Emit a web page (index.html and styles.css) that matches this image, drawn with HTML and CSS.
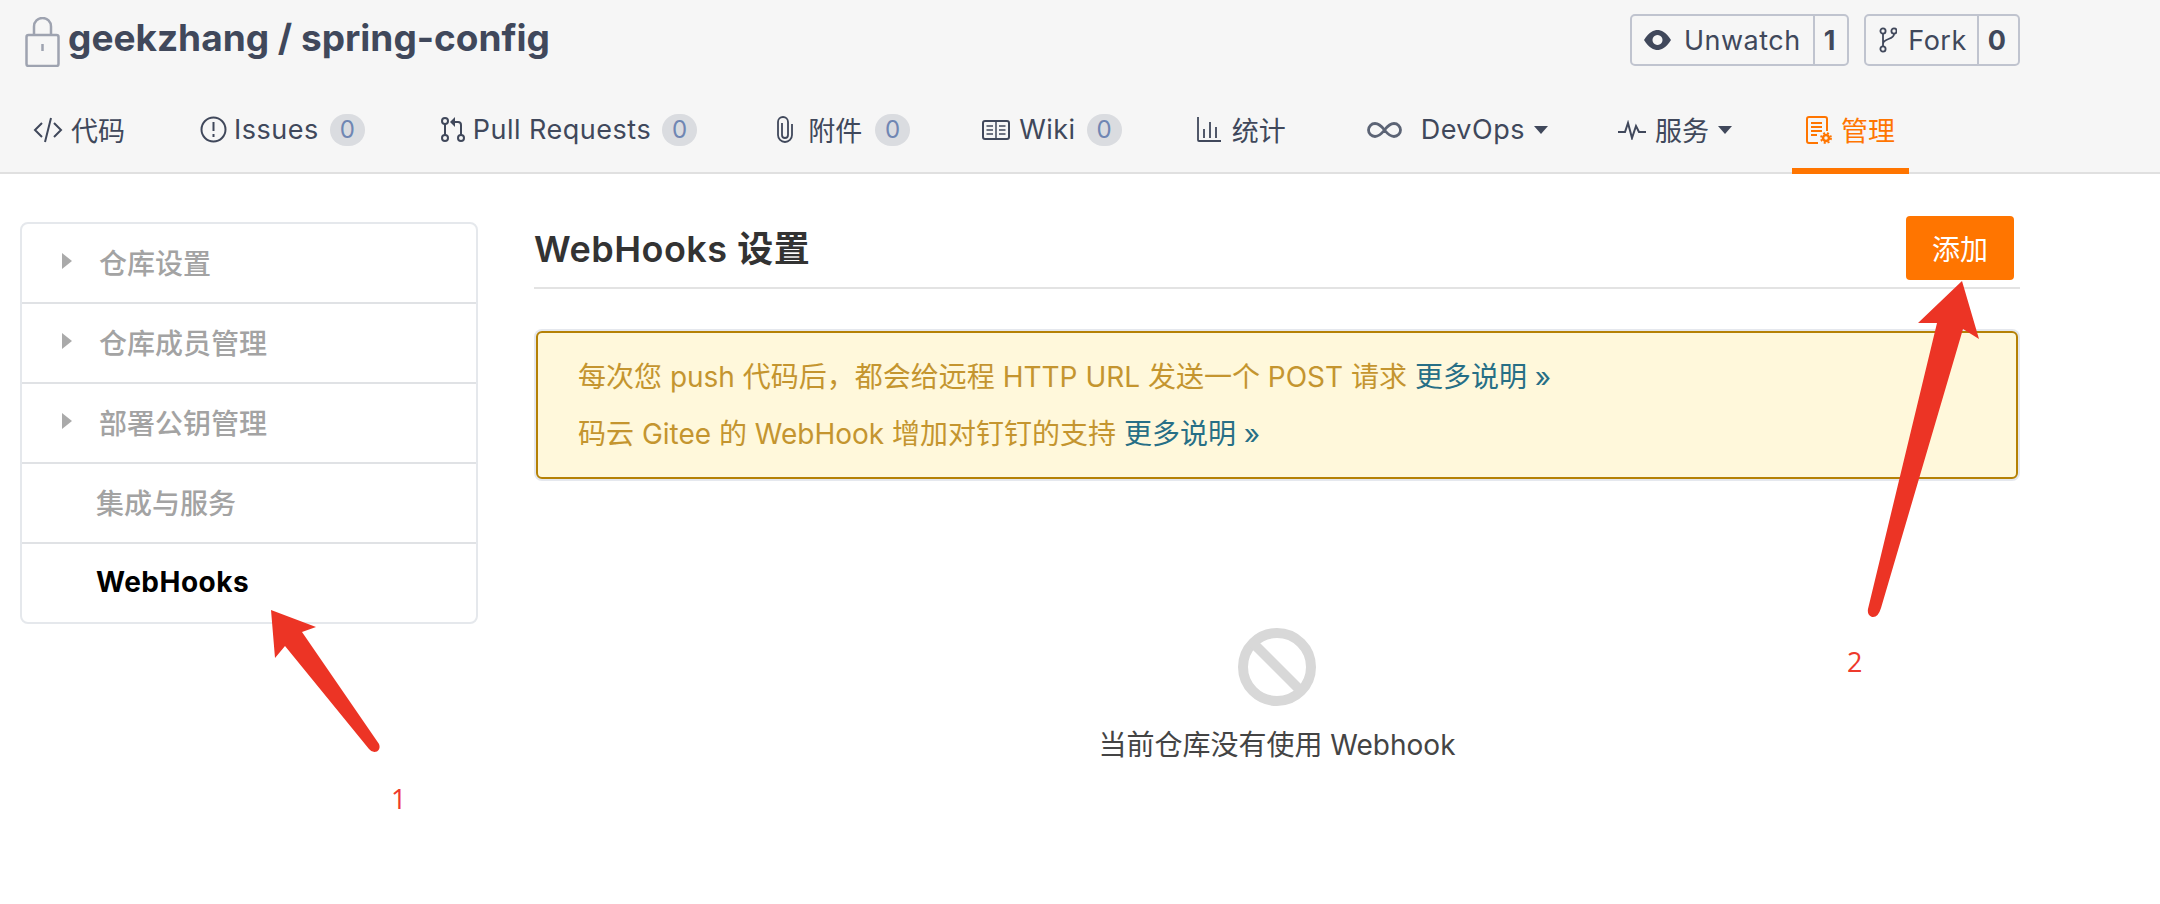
FILE: index.html
```html
<!DOCTYPE html>
<html lang="zh-CN">

<head>
    <meta charset="UTF-8">
    <meta name="viewport" content="width=device-width, initial-scale=1.0">
    <title>WebHooks 设置</title>
    <link rel="stylesheet" href="styles.css">
</head>

<body>
    <header class="repo-header">
        <div class="repo-top">
            <h1 class="repo-title">
                <svg class="lock" width="36" height="50" viewBox="0 0 36 50" fill="none" stroke="#9ea3b0" stroke-width="2.5">
                    <path d="M9 18V9.500a8.500 8.500 0 0 1 17 0V18" />
                    <rect x="1.500" y="18" width="32" height="31" rx="2" />
                    <path d="M17.500 27v7" />
                </svg>
                geekzhang / spring-config
            </h1>
            <div class="repo-actions">
                <div class="count-btn">
                    <span class="count-label">
                        <svg width="27" height="20" viewBox="0 0 27 20" fill="#40485b" fill-rule="evenodd">
                            <path d="M0 10C5 2 10 0 13.5 0S22 2 27 10C22 18 17 20 13.5 20S5 18 0 10zM13.5 5a5 5 0 1 0 .01 0z" />
                        </svg>
                        Unwatch
                    </span>
                    <span class="count-num">1</span>
                </div>
                <div class="count-btn">
                    <span class="count-label fork-label">
                        <svg width="18" height="26" viewBox="0 0 18 26" fill="none" stroke="#40485b" stroke-width="1.8">
                            <circle cx="4" cy="4" r="2.6" />
                            <circle cx="15" cy="4" r="2.6" />
                            <circle cx="4" cy="22" r="2.6" />
                            <path d="M4 7v12M15 7c0 6-11 4-11 10" />
                        </svg>
                        Fork
                    </span>
                    <span class="count-num">0</span>
                </div>
            </div>
        </div>

        <nav class="tabs">
            <a class="tab tab-code" href="#">
                <svg width="30" height="26" viewBox="0 0 30 26" fill="none" stroke="#40485b" stroke-width="2">
                    <path d="M9 6l-7 7 7 7M21 6l7 7-7 7M18 1l-6 24" />
                </svg>
                <span>代码</span>
            </a>
            <a class="tab tab-issues" href="#">
                <svg width="27" height="27" viewBox="0 0 27 27" fill="none" stroke="#40485b" stroke-width="2">
                    <circle cx="13.5" cy="13.5" r="12" />
                    <path d="M13.5 6v9M13.5 18v3" />
                </svg>
                <span class="tab-latin">Issues</span>
                <span class="badge">0</span>
            </a>
            <a class="tab tab-pulls" href="#">
                <svg width="24" height="25" viewBox="0 0 24 25" fill="none" stroke="#40485b" stroke-width="2">
                    <circle cx="4" cy="4" r="3" />
                    <circle cx="4" cy="21" r="3" />
                    <circle cx="20" cy="21" r="3" />
                    <path d="M4 7v11M20 18V8q0-3-3-3h-4" />
                    <path d="M14 0l-5 5 5 5z" fill="#40485b" stroke="none" />
                </svg>
                <span class="tab-latin">Pull Requests</span>
                <span class="badge">0</span>
            </a>
            <a class="tab tab-files" href="#">
                <svg width="18" height="28" viewBox="0 0 18 28" fill="none" stroke="#40485b" stroke-width="1.8">
                    <path d="M6 7v12a3 3 0 0 0 6 0V6a5 5 0 0 0-10 0v13a7 7 0 0 0 14 0V8" />
                </svg>
                <span>附件</span>
                <span class="badge">0</span>
            </a>
            <a class="tab tab-wiki" href="#">
                <svg width="28" height="20" viewBox="0 0 28 20" fill="none" stroke="#40485b" stroke-width="2">
                    <rect x="1" y="1" width="26" height="18" rx="2" />
                    <path d="M14 1v18M4.500 6h6.500M4.500 10h6.500M4.500 14h6.500M17 6h6.500M17 10h6.500M17 14h6.500" stroke-width="1.500" />
                </svg>
                <span class="tab-latin">Wiki</span>
                <span class="badge">0</span>
            </a>
            <a class="tab tab-stats" href="#">
                <svg width="24" height="25" viewBox="0 0 24 25" fill="none" stroke="#40485b" stroke-width="1.800">
                    <path d="M1 0v23q0 1 1 1h22M7 12v9M13 5v16M19 10v11" />
                </svg>
                <span>统计</span>
            </a>
            <a class="tab tab-devops" href="#">
                <svg width="35" height="16" viewBox="0 0 35 16" fill="none" stroke="#5c6475" stroke-width="2.800">
                    <path d="M17.500 8C14 3.500 11.500 1.500 8 1.500a6.500 6.500 0 0 0 0 13c3.500 0 6-2 9.500-6.500s6-6.500 9.500-6.500a6.500 6.500 0 0 1 0 13c-3.500 0-6-2-9.500-6.500z" />
                </svg>
                <span class="tab-latin">DevOps</span>
                <i class="caret"></i>
            </a>
            <a class="tab tab-services" href="#">
                <svg width="28" height="20" viewBox="0 0 28 20" fill="none" stroke="#40485b" stroke-width="2">
                    <path d="M0 12h7l3-9 4 15 4-12 3 6h7" />
                </svg>
                <span>服务</span>
                <i class="caret"></i>
            </a>
            <a class="tab tab-active" href="#">
                <svg width="26" height="28" viewBox="0 0 26 28" fill="none" stroke="#ff7500" stroke-width="2">
                    <path d="M12 27H3a2 2 0 0 1-2-2V3a2 2 0 0 1 2-2h16a2 2 0 0 1 2 2v12" />
                    <path d="M5 7h11M5 11h11M5 15h11M5 19h6" />
                    <circle cx="20" cy="22" r="3" stroke-width="2.500" />
                    <circle cx="20" cy="22" r="5" stroke-width="1.800" stroke-dasharray="2 2" />
                </svg>
                <span>管理</span>
            </a>
        </nav>
    </header>

    <div class="page">
        <aside class="side-menu">
            <div class="side-item"><i class="arrow"></i>仓库设置</div>
            <div class="side-item"><i class="arrow"></i>仓库成员管理</div>
            <div class="side-item"><i class="arrow"></i>部署公钥管理</div>
            <div class="side-item side-plain">集成与服务</div>
            <div class="side-item side-plain side-current">WebHooks</div>
        </aside>

        <main class="content">
            <div class="content-head">
                <h2>WebHooks 设置</h2>
                <button class="add-btn">添加</button>
            </div>

            <div class="notice">
                <p>每次您 push 代码后，都会给远程 HTTP URL 发送一个 POST 请求 <a href="#">更多说明 »</a></p>
                <p>码云 Gitee 的 WebHook 增加对钉钉的支持 <a href="#">更多说明 »</a></p>
            </div>

            <div class="empty">
                <svg width="80" height="80" viewBox="0 0 80 80" fill="none" stroke="#d8d8d8" stroke-width="10">
                    <circle cx="40" cy="40" r="34" />
                    <path d="M16 16l48 48" />
                </svg>
                <p>当前仓库没有使用 Webhook</p>
            </div>
        </main>
    </div>

    <!-- red annotations drawn over the page -->
    <svg class="marks" width="2160" height="904" viewBox="0 0 2160 904" fill="#ec3425">
        <path d="M271 610L316 627L302 632L379 744Q381 749 377 751.500Q372 753 369 749L285 646L275 658z" />
        <path d="M1962 281L1979 339L1963 329L1881 608Q1878 618 1872 617Q1867 615 1868 609L1937 323L1918 323z" />
    </svg>
    <span class="mark-num mark-one">1</span>
    <span class="mark-num mark-two">2</span>
</body>

</html>
```

FILE: styles.css
```css
html,
body {
    margin: 0;
    padding: 0;
    background: #fff;
    font-family: Inter, "Noto Sans CJK SC", sans-serif;
    font-size: 28px;
    color: #40485b;
}

body {
    position: relative;
    height: 904px;
    overflow: hidden;
}

a {
    text-decoration: none;
}

.repo-header {
    height: 172px;
    background-color: #f6f6f6;
    border-bottom: 2px solid #e0e0e0;
}

.repo-top {
    display: flex;
    justify-content: space-between;
    height: 104px;
    padding: 12px 140px 0 25px;
    box-sizing: border-box;
}

.repo-title {
    display: flex;
    align-items: flex-start;
    gap: 7px;
    margin: 0;
    font-size: 37px;
    line-height: 52px;
    font-weight: 700;
}

.lock {
    margin-top: 5px;
}

.repo-actions {
    display: flex;
    gap: 15px;
    height: 52px;
    margin-top: 2px;
    font-size: 27px;
}

.count-btn {
    display: flex;
    align-items: stretch;
    border: 2px solid #c0c4cf;
    border-radius: 5px;
    box-sizing: border-box;
}

.count-label {
    display: flex;
    align-items: center;
    gap: 13px;
    padding: 0 12px 0 12px;
    border-right: 2px solid #c0c4cf;
    letter-spacing: 0.5px;
}

.fork-label {
    gap: 11px;
    padding: 0 10px 0 13px;
}

.count-num {
    display: flex;
    align-items: center;
    padding: 0 12px 0 9px;
    font-weight: 700;
}

.tabs {
    display: flex;
    align-items: stretch;
    gap: 46px;
    height: 68px;
    padding-left: 19px;
    font-size: 27px;
}

.tab {
    --icon-gap: 8px;
    display: flex;
    align-items: center;
    height: 70px;
    box-sizing: border-box;
    padding: 0 14px 19px;
    color: #40485b;
}

.tab svg {
    margin-right: var(--icon-gap);
}

.tab-latin {
    letter-spacing: 0.5px;
}

.tab-issues {
    --icon-gap: 7px;
    margin-left: 1px;
}

.tab-pulls {
    margin-left: 2px;
}

.tab-files {
    --icon-gap: 14px;
    margin-left: 5px;
}

.tab-wiki {
    --icon-gap: 9px;
    margin-left: -2px;
}

.tab-stats {
    --icon-gap: 11px;
    margin-left: 1px;
}

.tab-devops {
    --icon-gap: 19px;
    margin-left: 7px;
}

.tab-services {
    --icon-gap: 9px;
    margin-left: -4px;
}

.tab-active {
    --icon-gap: 9px;
    padding-bottom: 13px;
    color: #ff7500;
    border-bottom: 6px solid #ff7500;
}

.badge {
    display: inline-block;
    width: 35px;
    height: 32px;
    margin-left: 13px;
    border-radius: 16px;
    background-color: #dadce0;
    color: #6f86b3;
    font-size: 24px;
    letter-spacing: 0;
    line-height: 32px;
    text-align: center;
}

.tab-latin + .badge {
    margin-left: 11px;
}

.caret {
    width: 0;
    height: 0;
    margin-left: 9px;
    border-left: 7px solid transparent;
    border-right: 7px solid transparent;
    border-top: 8px solid #40485b;
}

.page {
    display: flex;
    align-items: flex-start;
    padding: 48px 140px 0 20px;
}

.side-menu {
    width: 458px;
    flex-shrink: 0;
    box-sizing: border-box;
    border: 2px solid #e5e8ec;
    border-radius: 8px;
}

.side-item {
    display: flex;
    align-items: center;
    height: 75px;
    padding: 0 0 3px 40px;
    border-bottom: 2px solid #e0e2e5;
    color: #a3a3a3;
    font-weight: 500;
}

.side-item:last-child {
    border-bottom: none;
}

.arrow {
    width: 0;
    height: 0;
    margin-right: 27px;
    margin-bottom: 2px;
    border-top: 8px solid transparent;
    border-bottom: 8px solid transparent;
    border-left: 10px solid #aaa;
}

.side-plain {
    padding-left: 74px;
}

.side-current {
    color: #000;
    font-weight: 700;
    letter-spacing: 0.5px;
}

.content {
    flex: 1;
    margin-left: 56px;
}

.content-head {
    display: flex;
    justify-content: space-between;
    align-items: flex-start;
    height: 71px;
    margin-top: -6px;
    border-bottom: 2px solid #e3e3e3;
}

.content-head h2 {
    margin: 0;
    padding-top: 9px;
    font-size: 36px;
    line-height: 48px;
    font-weight: 600;
    letter-spacing: 0.5px;
    color: #333;
}

.add-btn {
    width: 108px;
    height: 64px;
    margin-right: 6px;
    border: none;
    border-radius: 4px;
    background-color: #ff7500;
    color: #fff;
    font-family: inherit;
    font-size: 28px;
}

.notice {
    margin: 42px 2px 0;
    padding: 16px 40px 14px;
    background-color: #fff8db;
    border: 2px solid #b58105;
    border-radius: 6px;
    box-shadow: 0 0 0 2px #e5e8ee;
    color: #c4952f;
}

.notice p {
    margin: 0;
    line-height: 57px;
}

.notice a {
    color: #276f86;
}

.empty {
    display: flex;
    flex-direction: column;
    align-items: center;
    margin-top: 148px;
    color: #444;
}

.empty p {
    margin: 18px 0 0;
    line-height: 40px;
}

.marks {
    position: absolute;
    top: 0;
    left: 0;
    pointer-events: none;
}

.mark-num {
    position: absolute;
    color: #ee3a2c;
    font-family: "Open Sans", sans-serif;
    font-size: 27px;
    line-height: 36px;
}

.mark-one {
    left: 391px;
    top: 781px;
}

.mark-two {
    left: 1847px;
    top: 644px;
}
```
